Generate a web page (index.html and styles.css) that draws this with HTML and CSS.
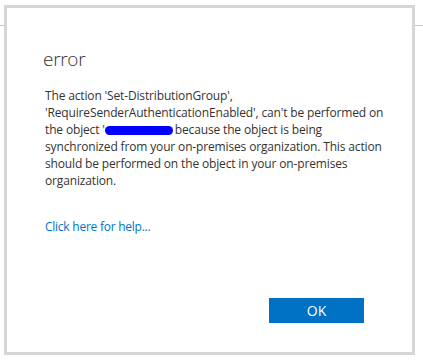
FILE: index.html
```html
<!DOCTYPE html>
<html>
<head>
    <meta charset="UTF-8">
    <meta name="viewport" content="width=device-width, initial-scale=1.0">
    <title>error</title>
    <link rel="stylesheet" href="styles.css">
</head>
<body>
    <div class="page-rule"></div>

    <div class="dialog">
        <h1 class="title">error</h1>
        <p class="message">
            The action 'Set-DistributionGroup', 'RequireSenderAuthenticationEnabled', can't be performed on
            the object '<span class="redact"></span>because the object is being synchronized from your
            on-premises organization. This action should be performed on the object in your on-premises
            organization.
        </p>
        <a class="help" href="#">Click here for help...</a>
        <div class="footer">
            <button class="ok" type="button">OK</button>
        </div>
    </div>
</body>
</html>
```

FILE: styles.css
```css
body {
    margin: 0;
    background: #fff;
    font-family: "Open Sans", "Noto Sans", sans-serif;
    color: #333;
}
.page-rule {
    height: 25px;
    border-bottom: 1px solid #c8c8c8;
}
/* modal over the page */
.dialog {
    position: absolute;
    left: 4px;
    top: 5px;
    width: 405px;
    height: 344px;
    border: 3px solid #d6d6d6;
    background: #fff;
    display: flex;
    flex-direction: column;
}
.title {
    margin: 37px 0 0 36px;
    font-size: 19px;
    font-weight: 300;
    line-height: 28px;
    letter-spacing: -0.3px;
    color: #333;
}
.message {
    margin: 14px 0 0 38px;
    width: 340px;
    font-size: 12px;
    line-height: 17px;
    letter-spacing: -0.15px;
}
.redact {
    display: inline-block;
    width: 68px;
    height: 9px;
    margin-right: 2px;
    vertical-align: middle;
    background: #0000ff;
    border-radius: 5px;
}
.help {
    margin: 29px 0 0 38px;
    font-size: 12px;
    line-height: 17px;
    letter-spacing: -0.25px;
    color: #0072c6;
    text-decoration: none;
    align-self: flex-start;
}
.footer {
    margin-top: auto;
    padding: 0 48px 29px 0;
    display: flex;
    justify-content: flex-end;
}
.ok {
    width: 95px;
    height: 25px;
    border: none;
    background: #0072c6;
    color: #fff;
    font-family: "Open Sans", "Noto Sans", sans-serif;
    font-size: 14px;
    padding: 0;
    cursor: pointer;
}
```
